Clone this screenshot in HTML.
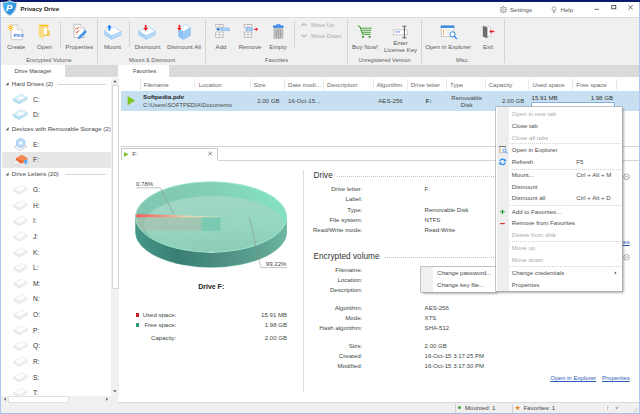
<!DOCTYPE html>
<html><head><meta charset="utf-8"><title>Privacy Drive</title>
<style>
html,body{margin:0;padding:0;}
body{width:640px;height:414px;overflow:hidden;position:relative;background:#fff;font-family:"Liberation Sans",sans-serif;}
.r{position:absolute;display:block;}
.t{position:absolute;line-height:10px;white-space:nowrap;}
</style></head><body>

<div class="r" style="left:0.00px;top:0.00px;width:640.00px;height:414.00px;background:#fff;"></div>
<div class="r" style="left:0.00px;top:17.50px;width:640.00px;height:47.00px;background:#f0f0f0;"></div>
<div class="r" style="left:0.00px;top:17.00px;width:640.00px;height:0.80px;background:#dcdcdc;"></div>
<div class="r" style="left:0.00px;top:64.50px;width:640.00px;height:12.70px;background:#dadada;"></div>
<div class="r" style="left:1.20px;top:64.60px;width:64.10px;height:13.00px;background:#fff;"></div>
<div class="r" style="left:118.10px;top:64.60px;width:50.90px;height:13.00px;background:#fff;"></div>
<span class="t" style="top:3.80px;font-size:6.1px;color:#1a1a1a;font-weight:bold;left:20.50px;">Privacy Drive</span>
<span class="t" style="top:4.50px;font-size:6.1px;color:#555;left:510.00px;">Settings</span>
<span class="t" style="top:4.50px;font-size:6.1px;color:#555;left:560.50px;">Help</span>
<div class="r" style="left:97.00px;top:19.00px;width:1.00px;height:44.00px;background:#d4d4d4;"></div>
<div class="r" style="left:205.00px;top:19.00px;width:1.00px;height:44.00px;background:#d4d4d4;"></div>
<div class="r" style="left:346.50px;top:19.00px;width:1.00px;height:44.00px;background:#d4d4d4;"></div>
<div class="r" style="left:420.50px;top:19.00px;width:1.00px;height:44.00px;background:#d4d4d4;"></div>
<div class="r" style="left:503.50px;top:19.00px;width:1.00px;height:44.00px;background:#d4d4d4;"></div>
<div class="r" style="left:60.00px;top:21.00px;width:1.00px;height:26.00px;background:#d4d4d4;"></div>
<div class="r" style="left:129.00px;top:21.00px;width:1.00px;height:26.00px;background:#d4d4d4;"></div>
<div class="r" style="left:293.90px;top:21.00px;width:1.00px;height:26.00px;background:#d4d4d4;"></div>
<span class="t" style="top:41.90px;font-size:6.1px;color:#5c5c5c;left:-133.90px;width:300px;text-align:center;">Create</span>
<span class="t" style="top:41.90px;font-size:6.1px;color:#5c5c5c;left:-105.50px;width:300px;text-align:center;">Open</span>
<span class="t" style="top:41.90px;font-size:6.1px;color:#5c5c5c;left:-70.50px;width:300px;text-align:center;">Properties</span>
<span class="t" style="top:41.90px;font-size:6.1px;color:#5c5c5c;left:-37.50px;width:300px;text-align:center;">Mount</span>
<span class="t" style="top:41.90px;font-size:6.1px;color:#5c5c5c;left:-2.50px;width:300px;text-align:center;">Dismount</span>
<span class="t" style="top:41.90px;font-size:6.1px;color:#5c5c5c;left:34.00px;width:300px;text-align:center;">Dismount All</span>
<span class="t" style="top:41.90px;font-size:6.1px;color:#5c5c5c;left:71.00px;width:300px;text-align:center;">Add</span>
<span class="t" style="top:41.90px;font-size:6.1px;color:#5c5c5c;left:100.00px;width:300px;text-align:center;">Remove</span>
<span class="t" style="top:41.90px;font-size:6.1px;color:#5c5c5c;left:128.00px;width:300px;text-align:center;">Empty</span>
<span class="t" style="top:41.90px;font-size:6.1px;color:#5c5c5c;left:215.00px;width:300px;text-align:center;">Buy Now!</span>
<span class="t" style="top:41.90px;font-size:6.1px;color:#5c5c5c;left:298.00px;width:300px;text-align:center;">Open in Explorer</span>
<span class="t" style="top:41.90px;font-size:6.1px;color:#5c5c5c;left:338.00px;width:300px;text-align:center;">Exit</span>
<span class="t" style="top:38.20px;font-size:6.1px;color:#5c5c5c;left:250.50px;width:300px;text-align:center;">Enter</span>
<span class="t" style="top:45.30px;font-size:6.1px;color:#5c5c5c;left:250.50px;width:300px;text-align:center;">License Key</span>
<span class="t" style="top:55.20px;font-size:5.6px;color:#5c5c5c;left:-101.00px;width:300px;text-align:center;">Encrypted Volume</span>
<span class="t" style="top:55.20px;font-size:5.6px;color:#5c5c5c;left:2.00px;width:300px;text-align:center;">Mount &amp; Dismount</span>
<span class="t" style="top:55.20px;font-size:5.6px;color:#5c5c5c;left:126.50px;width:300px;text-align:center;">Favorites</span>
<span class="t" style="top:55.20px;font-size:5.6px;color:#5c5c5c;left:234.50px;width:300px;text-align:center;">Unregistered Version</span>
<span class="t" style="top:55.20px;font-size:5.6px;color:#5c5c5c;left:312.50px;width:300px;text-align:center;">Misc.</span>
<span class="t" style="top:20.10px;font-size:5.82px;color:#aaa;left:311.00px;">Move Up</span>
<span class="t" style="top:31.20px;font-size:5.82px;color:#aaa;left:311.00px;">Move Down</span>
<span class="t" style="top:66.30px;font-size:5.65px;color:#484848;left:-117.10px;width:300px;text-align:center;">Drive Manager</span>
<span class="t" style="top:66.30px;font-size:5.65px;color:#484848;left:-5.40px;width:300px;text-align:center;">Favorites</span>
<div class="r" style="left:0.00px;top:77.50px;width:119.00px;height:325.00px;background:#fff;"></div>
<div class="r" style="left:1.50px;top:151.50px;width:109.20px;height:16.50px;background:#e6e6e6;"></div>
<span class="t" style="top:78.80px;font-size:6.1px;color:#444;left:11.80px;">Hard Drives (2)</span>
<div class="r" style="left:58.00px;top:83.80px;width:48.00px;height:0.70px;background:#d8d8d8;"></div>
<span class="t" style="top:123.80px;font-size:6.1px;color:#444;left:11.80px;">Devices with Removable Storage (2)</span>
<span class="t" style="top:169.00px;font-size:6.1px;color:#444;left:11.80px;">Drive Letters (20)</span>
<div class="r" style="left:65.00px;top:174.00px;width:41.00px;height:0.70px;background:#d8d8d8;"></div>
<span class="t" style="top:94.70px;font-size:6.6px;color:#333;left:33.00px;">C:</span>
<span class="t" style="top:110.20px;font-size:6.6px;color:#333;left:33.00px;">D:</span>
<span class="t" style="top:139.70px;font-size:6.6px;color:#333;left:33.00px;">E:</span>
<span class="t" style="top:155.00px;font-size:6.6px;color:#333;left:33.00px;">F:</span>
<span class="t" style="top:185.00px;font-size:6.6px;color:#333;left:33.00px;">G:</span>
<span class="t" style="top:200.70px;font-size:6.6px;color:#333;left:33.00px;">H:</span>
<span class="t" style="top:216.40px;font-size:6.6px;color:#333;left:33.00px;">I:</span>
<span class="t" style="top:231.90px;font-size:6.6px;color:#333;left:33.00px;">J:</span>
<span class="t" style="top:247.60px;font-size:6.6px;color:#333;left:33.00px;">K:</span>
<span class="t" style="top:263.20px;font-size:6.6px;color:#333;left:33.00px;">L:</span>
<span class="t" style="top:278.70px;font-size:6.6px;color:#333;left:33.00px;">M:</span>
<span class="t" style="top:294.40px;font-size:6.6px;color:#333;left:33.00px;">N:</span>
<span class="t" style="top:310.00px;font-size:6.6px;color:#333;left:33.00px;">O:</span>
<span class="t" style="top:325.60px;font-size:6.6px;color:#333;left:33.00px;">P:</span>
<span class="t" style="top:341.30px;font-size:6.6px;color:#333;left:33.00px;">Q:</span>
<span class="t" style="top:357.00px;font-size:6.6px;color:#333;left:33.00px;">R:</span>
<span class="t" style="top:372.70px;font-size:6.6px;color:#333;left:33.00px;">S:</span>
<span class="t" style="top:388.00px;font-size:6.6px;color:#333;left:33.00px;">T:</span>
<div class="r" style="left:119.50px;top:77.50px;width:519.50px;height:68.50px;background:#fff;"></div>
<div class="r" style="left:139.60px;top:79.00px;width:0.80px;height:11.00px;background:#e9e9e9;"></div>
<div class="r" style="left:194.10px;top:79.00px;width:0.80px;height:11.00px;background:#e9e9e9;"></div>
<div class="r" style="left:249.60px;top:79.00px;width:0.80px;height:11.00px;background:#e9e9e9;"></div>
<div class="r" style="left:283.80px;top:79.00px;width:0.80px;height:11.00px;background:#e9e9e9;"></div>
<div class="r" style="left:322.80px;top:79.00px;width:0.80px;height:11.00px;background:#e9e9e9;"></div>
<div class="r" style="left:373.30px;top:79.00px;width:0.80px;height:11.00px;background:#e9e9e9;"></div>
<div class="r" style="left:407.10px;top:79.00px;width:0.80px;height:11.00px;background:#e9e9e9;"></div>
<div class="r" style="left:446.30px;top:79.00px;width:0.80px;height:11.00px;background:#e9e9e9;"></div>
<div class="r" style="left:484.60px;top:79.00px;width:0.80px;height:11.00px;background:#e9e9e9;"></div>
<div class="r" style="left:528.10px;top:79.00px;width:0.80px;height:11.00px;background:#e9e9e9;"></div>
<div class="r" style="left:572.10px;top:79.00px;width:0.80px;height:11.00px;background:#e9e9e9;"></div>
<div class="r" style="left:616.10px;top:79.00px;width:0.80px;height:11.00px;background:#e9e9e9;"></div>
<span class="t" style="top:79.60px;font-size:6.1px;color:#6a6a6a;left:143.70px;">Filename</span>
<span class="t" style="top:79.60px;font-size:6.1px;color:#6a6a6a;left:198.70px;">Location</span>
<span class="t" style="top:79.60px;font-size:6.1px;color:#6a6a6a;left:253.70px;">Size</span>
<span class="t" style="top:79.60px;font-size:6.1px;color:#6a6a6a;left:288.00px;">Date modi...</span>
<span class="t" style="top:79.60px;font-size:6.1px;color:#6a6a6a;left:327.00px;">Description</span>
<span class="t" style="top:79.60px;font-size:6.1px;color:#6a6a6a;left:376.70px;">Algorithm</span>
<span class="t" style="top:79.60px;font-size:6.1px;color:#6a6a6a;left:410.70px;">Drive letter</span>
<span class="t" style="top:79.60px;font-size:6.1px;color:#6a6a6a;left:450.00px;">Type</span>
<span class="t" style="top:79.60px;font-size:6.1px;color:#6a6a6a;left:488.70px;">Capacity</span>
<span class="t" style="top:79.60px;font-size:6.1px;color:#6a6a6a;left:532.50px;">Used space</span>
<span class="t" style="top:79.60px;font-size:6.1px;color:#6a6a6a;left:576.20px;">Free space</span>
<div class="r" style="left:121.00px;top:91.00px;width:517.70px;height:19.80px;background:#c6dff1;"></div>
<span class="t" style="top:91.80px;font-size:6.2px;color:#222;font-weight:bold;left:143.00px;">Softpedia.pdv</span>
<span class="t" style="top:99.90px;font-size:5.87px;color:#4a4a4a;left:143.00px;">C:\Users\SOFTPEDIA\Documents</span>
<span class="t" style="top:96.30px;font-size:6.1px;color:#444;right:360.50px;">2.00 GB</span>
<span class="t" style="top:96.30px;font-size:6.1px;color:#444;left:288.00px;">16-Oct-15...</span>
<span class="t" style="top:96.30px;font-size:6.1px;color:#444;left:240.50px;width:300px;text-align:center;">AES-256</span>
<span class="t" style="top:96.30px;font-size:6.1px;color:#333;font-weight:bold;left:278.70px;width:300px;text-align:center;">F:</span>
<span class="t" style="top:92.60px;font-size:6.1px;color:#444;left:316.70px;width:300px;text-align:center;">Removable</span>
<span class="t" style="top:100.20px;font-size:6.1px;color:#444;left:316.70px;width:300px;text-align:center;">Disk</span>
<span class="t" style="top:96.30px;font-size:6.1px;color:#444;right:115.70px;">2.00 GB</span>
<span class="t" style="top:92.60px;font-size:6.1px;color:#333;left:531.60px;">15.91 MB</span>
<span class="t" style="top:92.60px;font-size:6.1px;color:#333;right:27.00px;">1.98 GB</span>
<div class="r" style="left:531.50px;top:103.00px;width:82.00px;height:6.00px;background:#fff;box-shadow:0 0 0 0.7px #6a9bd8;"></div>
<div class="r" style="left:119.50px;top:146.20px;width:519.50px;height:0.80px;background:#d4d4d4;"></div>
<div class="r" style="left:217.50px;top:159.50px;width:421.50px;height:0.80px;background:#d4d4d4;"></div>
<div class="r" style="left:120.60px;top:147.70px;width:97.00px;height:12.50px;background:#fff;border-right:0.8px solid #cacaca;border-left:0.8px solid #cacaca;border-top:0.8px solid #cacaca;box-sizing:border-box;"></div>
<span class="t" style="top:149.30px;font-size:6.1px;color:#444;left:132.30px;">F:</span>
<div class="r" style="left:302.60px;top:170.00px;width:0.80px;height:222.30px;background:#dcdcdc;"></div>
<span class="t" style="top:171.30px;font-size:8.25px;color:#333;left:313.50px;">Drive</span>
<div class="r" style="left:336.50px;top:176.30px;width:279.00px;height:0.00px;background:transparent;border-top:0.8px dotted #c4c4c4;"></div>
<span class="t" style="top:251.60px;font-size:8.25px;color:#333;left:313.50px;">Encrypted volume</span>
<div class="r" style="left:384.60px;top:256.60px;width:231.00px;height:0.00px;background:transparent;border-top:0.8px dotted #c4c4c4;"></div>
<span class="t" style="top:184.20px;font-size:6.15px;color:#3c4a44;right:277.70px;">Drive letter:</span>
<span class="t" style="top:184.20px;font-size:6.05px;color:#3c4a44;left:424.60px;">F:</span>
<span class="t" style="top:194.40px;font-size:6.15px;color:#3c4a44;right:277.70px;">Label:</span>
<span class="t" style="top:204.60px;font-size:6.15px;color:#3c4a44;right:277.70px;">Type:</span>
<span class="t" style="top:204.60px;font-size:6.05px;color:#3c4a44;left:424.60px;">Removable Disk</span>
<span class="t" style="top:214.80px;font-size:6.15px;color:#3c4a44;right:277.70px;">File system:</span>
<span class="t" style="top:214.80px;font-size:6.05px;color:#3c4a44;left:424.60px;">NTFS</span>
<span class="t" style="top:225.00px;font-size:6.15px;color:#3c4a44;right:277.70px;">Read/Write mode:</span>
<span class="t" style="top:225.00px;font-size:6.05px;color:#3c4a44;left:424.60px;">Read-Write</span>
<span class="t" style="top:264.70px;font-size:6.15px;color:#3c4a44;right:277.70px;">Filename:</span>
<span class="t" style="top:274.90px;font-size:6.15px;color:#3c4a44;right:277.70px;">Location:</span>
<span class="t" style="top:285.00px;font-size:6.15px;color:#3c4a44;right:277.70px;">Description:</span>
<span class="t" style="top:302.50px;font-size:6.15px;color:#3c4a44;right:277.70px;">Algorithm:</span>
<span class="t" style="top:302.50px;font-size:6.05px;color:#3c4a44;left:424.60px;">AES-256</span>
<span class="t" style="top:312.70px;font-size:6.15px;color:#3c4a44;right:277.70px;">Mode:</span>
<span class="t" style="top:312.70px;font-size:6.05px;color:#3c4a44;left:424.60px;">XTS</span>
<span class="t" style="top:322.90px;font-size:6.15px;color:#3c4a44;right:277.70px;">Hash algorithm:</span>
<span class="t" style="top:322.90px;font-size:6.05px;color:#3c4a44;left:424.60px;">SHA-512</span>
<span class="t" style="top:340.50px;font-size:6.15px;color:#3c4a44;right:277.70px;">Size:</span>
<span class="t" style="top:340.50px;font-size:6.05px;color:#3c4a44;left:424.60px;">2.00 GB</span>
<span class="t" style="top:350.60px;font-size:6.15px;color:#3c4a44;right:277.70px;">Created:</span>
<span class="t" style="top:350.60px;font-size:6.05px;color:#3c4a44;left:424.60px;">16-Oct-15 3:17:25 PM</span>
<span class="t" style="top:360.60px;font-size:6.15px;color:#3c4a44;right:277.70px;">Modified:</span>
<span class="t" style="top:360.60px;font-size:6.05px;color:#3c4a44;left:424.60px;">16-Oct-15 3:17:30 PM</span>
<span class="t" style="top:373.40px;font-size:6.1px;color:#2a5db8;left:550.40px;text-decoration:underline;">Open in Explorer</span>
<span class="t" style="top:373.40px;font-size:6.1px;color:#2a5db8;left:602.00px;text-decoration:underline;">Properties</span>
<span class="t" style="top:237.40px;font-size:6.1px;color:#2a5db8;left:602.00px;text-decoration:underline;">Properties</span>
<svg class="r" style="left:0;top:0" width="640" height="414" viewBox="0 0 640 414"><defs>
<linearGradient id="side" x1="0" y1="0" x2="1" y2="0"><stop offset="0" stop-color="#459688"/><stop offset="0.28" stop-color="#3a7f74"/><stop offset="0.52" stop-color="#4a8c80"/><stop offset="0.85" stop-color="#5fa493"/><stop offset="1" stop-color="#6eb8a2"/></linearGradient>
<linearGradient id="topg" x1="0" y1="0.6" x2="1" y2="0.3"><stop offset="0" stop-color="#7cc2ae"/><stop offset="0.6" stop-color="#7ecdb4"/><stop offset="1" stop-color="#80e2c2"/></linearGradient>
<linearGradient id="ing" x1="0.3" y1="0" x2="0.6" y2="1"><stop offset="0" stop-color="#a2d6c6" stop-opacity="0.9"/><stop offset="0.55" stop-color="#98d6c0" stop-opacity="0.8"/><stop offset="1" stop-color="#8ccbb6" stop-opacity="0.75"/></linearGradient>
<linearGradient id="wed" x1="0" y1="0" x2="1" y2="0"><stop offset="0" stop-color="#ec5a54"/><stop offset="0.3" stop-color="#ee8c78"/><stop offset="0.6" stop-color="#e8d4ac"/><stop offset="1" stop-color="#b4e2c6"/></linearGradient>
<pattern id="hat" width="1.6" height="1.6" patternUnits="userSpaceOnUse" patternTransform="rotate(45)"><rect width="0.5" height="1.6" fill="#ffffff" fill-opacity="0.10"/></pattern>
<clipPath id="topclip"><ellipse cx="211.1" cy="217.0" rx="75.8" ry="35.5"/></clipPath>
</defs><path d="M135.3,217.0 L135.3,232.0 A75.8,35.5 0 0 0 286.9,232.0 L286.9,217.0 Z" fill="url(#side)"/><path d="M135.3,232.0 A75.8,35.5 0 0 0 286.9,232.0" fill="none" stroke="#6fc0a8" stroke-width="0.5" stroke-opacity="0.7"/><ellipse cx="211.1" cy="217.0" rx="75.8" ry="35.5" fill="url(#topg)"/><g clip-path="url(#topclip)"><ellipse cx="213.7" cy="224.6" rx="69.8" ry="28.5" fill="url(#ing)"/><rect x="135.3" y="217.0" width="66.2" height="13.7" fill="#a8bca8" fill-opacity="0.62"/><rect x="201.5" y="217.0" width="19.2" height="13.7" fill="#6cc4ac" fill-opacity="0.75"/><polygon points="135.3,214.0 135.3,217.2 221,217.2 221,216.6" fill="url(#wed)"/></g><ellipse cx="211.1" cy="217.0" rx="75.8" ry="35.5" fill="url(#hat)"/><ellipse cx="211.1" cy="217.0" rx="75.5" ry="35.2" fill="none" stroke="#a4f2d6" stroke-width="0.7" stroke-opacity="0.85"/><ellipse cx="211.1" cy="252.3" rx="4.5" ry="0.6" fill="#fff" fill-opacity="0.4"/><path d="M136,187.8 L160.5,187.8 L174.2,215" fill="none" stroke="#8a8a8a" stroke-width="0.5"/><path d="M249.4,217.9 L261,267.6 L287,267.6" fill="none" stroke="#8a8a8a" stroke-width="0.5"/></svg>
<span class="t" style="top:178.70px;font-size:6.1px;color:#444;left:136.00px;">0.78%</span>
<span class="t" style="top:258.80px;font-size:6.1px;color:#444;left:265.80px;">99.22%</span>
<span class="t" style="top:281.50px;font-size:7px;color:#222;font-weight:bold;left:61.20px;width:300px;text-align:center;">Drive F:</span>
<div class="r" style="left:136.20px;top:313.30px;width:3.30px;height:3.30px;background:#c8202a;"></div>
<div class="r" style="left:136.20px;top:323.30px;width:3.30px;height:3.30px;background:#2f9a80;"></div>
<span class="t" style="top:310.00px;font-size:6.05px;color:#3c4a44;right:463.70px;">Used space:</span>
<span class="t" style="top:320.00px;font-size:6.05px;color:#3c4a44;right:463.70px;">Free space:</span>
<span class="t" style="top:333.00px;font-size:6.05px;color:#3c4a44;right:463.70px;">Capacity:</span>
<span class="t" style="top:310.00px;font-size:6.05px;color:#3c4a44;right:353.00px;">15.91 MB</span>
<span class="t" style="top:320.00px;font-size:6.05px;color:#3c4a44;right:353.00px;">1.98 GB</span>
<span class="t" style="top:333.00px;font-size:6.05px;color:#3c4a44;right:353.00px;">2.00 GB</span>
<div class="r" style="left:0.00px;top:402.30px;width:640.00px;height:11.00px;background:#f0f0f0;border-top:0.7px solid #dadada;"></div>
<div class="r" style="left:454.70px;top:403.50px;width:0.80px;height:9.00px;background:#d0d0d0;"></div>
<div class="r" style="left:511.50px;top:403.50px;width:0.80px;height:9.00px;background:#d0d0d0;"></div>
<div class="r" style="left:458.30px;top:406.20px;width:3.20px;height:3.20px;background:#3aa635;border-radius:50%;"></div>
<span class="t" style="top:402.90px;font-size:6.1px;color:#444;left:465.00px;">Mounted: 1</span>
<span class="t" style="top:402.90px;font-size:6.1px;color:#444;left:523.40px;">Favorites: 1</span>
<div class="r" style="left:0.00px;top:0.00px;width:640.00px;height:1.70px;background:#0a1a6a;"></div>
<div class="r" style="left:0.00px;top:1.70px;width:1.20px;height:412.30px;background:#b4c6ee;"></div>
<div class="r" style="left:638.80px;top:1.70px;width:1.20px;height:412.30px;background:#b4c6ee;"></div>
<div class="r" style="left:0.00px;top:412.60px;width:640.00px;height:1.40px;background:#a9bdec;"></div>
<svg class="r" style="left:0;top:0" width="640" height="414" viewBox="0 0 640 414"><defs><linearGradient id="lg" x1="0" y1="0" x2="1" y2="1"><stop offset="0" stop-color="#52bcf2"/><stop offset="1" stop-color="#1a80d8"/></linearGradient></defs><path d="M9.7,0.6 C7.6,2.2 5,2.6 2.6,2.4 C2.4,8 4.6,13 9.7,15.7 C14.8,13 17,8 16.8,2.4 C14.4,2.6 11.8,2.2 9.7,0.6 Z" fill="url(#lg)" stroke="#d4dae4" stroke-width="1.1"/><text x="5.9" y="11.3" font-family="Liberation Sans, sans-serif" font-size="9.6" font-weight="bold" font-style="italic" fill="#fff">P</text><g fill="none" stroke="#8a8a8a" stroke-width="0.7"><circle cx="503.4" cy="9.7" r="2.7"/><circle cx="503.4" cy="9.7" r="1" /><path d="M506.10,9.70 L507.00,9.70" stroke-width="1.1"/><path d="M505.31,11.61 L505.95,12.25" stroke-width="1.1"/><path d="M503.40,12.40 L503.40,13.30" stroke-width="1.1"/><path d="M501.49,11.61 L500.85,12.25" stroke-width="1.1"/><path d="M500.70,9.70 L499.80,9.70" stroke-width="1.1"/><path d="M501.49,7.79 L500.85,7.15" stroke-width="1.1"/><path d="M503.40,7.00 L503.40,6.10" stroke-width="1.1"/><path d="M505.31,7.79 L505.95,7.15" stroke-width="1.1"/></g><g fill="none" stroke="#8a8a8a" stroke-width="0.7"><circle cx="554" cy="8.6" r="1.9"/><path d="M553.2,10.4 L553.2,12.6 L554.8,12.6 L554.8,10.4"/></g><path d="M594.5,9.3 L599,9.3" stroke="#333" stroke-width="0.7"/><rect x="611.8" y="5.6" width="4" height="3.2" fill="none" stroke="#333" stroke-width="0.8"/><path d="M628.5,5.2 L632.7,9.6 M632.7,5.2 L628.5,9.6" stroke="#333" stroke-width="0.7"/><path d="M11.6,25 L17.4,25 L22.1,29.7 L22.1,39.2 Q22.1,39.7 21.6,39.7 L11.6,39.7 Q11.1,39.7 11.1,39.2 L11.1,25.5 Q11.1,25 11.6,25 Z" fill="#fff" stroke="#b4b4b4" stroke-width="0.7"/><path d="M17.4,25 L17.4,29.7 L22.1,29.7" fill="#f4f4f4" stroke="#b4b4b4" stroke-width="0.6"/><text x="13.8" y="37" font-family="Liberation Sans, sans-serif" font-size="4.3" font-weight="bold" fill="#1f6fe0" textLength="10.2" lengthAdjust="spacingAndGlyphs">PDV</text><g stroke="#fcc228" stroke-width="0.9" stroke-linecap="round"><path d="M11.50,27.50 L13.30,27.50"/><path d="M11.21,28.21 L12.48,29.48"/><path d="M10.50,28.50 L10.50,30.30"/><path d="M9.79,28.21 L8.52,29.48"/><path d="M9.50,27.50 L7.70,27.50"/><path d="M9.79,26.79 L8.52,25.52"/><path d="M10.50,26.50 L10.50,24.70"/><path d="M11.21,26.79 L12.48,25.52"/></g><circle cx="10.5" cy="27.5" r="1.5" fill="#fcc228"/><circle cx="10.5" cy="27.5" r="0.6" fill="#fff4c8"/><rect x="38.8" y="24.8" width="9.5" height="11.1" fill="#f9d870"/><rect x="38.8" y="24.8" width="9.5" height="1.2" fill="#f5c020"/><path d="M47,30.5 L48.8,30.5 L49.9,31.8 L49.9,35.9 L47,35.9 Z" fill="#f7cc5c"/><path d="M43.9,28.6 L45,27.5 L46,27.5 L47,28.6 L47,34.7 L43.9,34.7 Z" fill="#fff"/><rect x="43.5" y="34.7" width="4.8" height="1.2" fill="#f5c332"/><path d="M38.8,25.6 L43.5,27.3 L43.5,38.9 L38.8,36.8 Z" fill="#f9dd88"/><path d="M74.4,24.3 L80.3,24.3 L84.3,28.1 L84.3,37.5 L74,37.5 L74,24.3 Z" fill="#fff" stroke="#a8a8a8" stroke-width="0.7"/><path d="M80.3,24.3 L80.3,28.1 L84.3,28.1" fill="#f4f4f4" stroke="#b4b4b4" stroke-width="0.5"/><path d="M75.5,28 L76.7,29.3 L79,26.9" fill="none" stroke="#e8501c" stroke-width="1"/><path d="M75.5,31.6 L76.7,32.8 L79,30.4" fill="none" stroke="#e02424" stroke-width="1"/><path d="M76.6,34.7 L78.6,34.7" stroke="#bbb" stroke-width="0.7"/><path d="M86,31 L79,37.8" stroke="#3a8ae8" stroke-width="2.5" stroke-linecap="butt"/><path d="M85.4,30.4 L78.6,37" stroke="#7ab4f4" stroke-width="0.6"/><circle cx="78.5" cy="38.3" r="0.7" fill="#1f6fe0"/><polygon points="104.6,31.2 111.6,35.8 111.6,39.3 104.6,34.7" fill="#8ec6f6" stroke="#78b8f2" stroke-width="0.5" stroke-linejoin="round"/><polygon points="121.1,31.4 111.6,35.8 111.6,39.3 121.1,34.9" fill="#a6d2f8" stroke="#78b8f2" stroke-width="0.5" stroke-linejoin="round"/><polyline points="104.6,32.36666666666667 111.6,36.96666666666666 121.1,32.56666666666666" fill="none" stroke="#d8ecfc" stroke-width="0.6"/><polyline points="104.6,33.53333333333333 111.6,38.13333333333333 121.1,33.733333333333334" fill="none" stroke="#d8ecfc" stroke-width="0.6"/><polygon points="114.2,27 121.1,31.4 111.6,35.8 104.6,31.2" fill="#fff" stroke="#78b8f2" stroke-width="0.5" stroke-linejoin="round"/><path d="M109.4,30.6 L109.4,26.3" stroke="#0a7cff" stroke-width="1.6"/><polygon points="109.4,24.8 111.7,27.400000000000002 107.10000000000001,27.400000000000002" fill="#0a7cff"/><polygon points="138.8,31.2 146.2,35.8 146.2,39.3 138.8,34.7" fill="#8ec6f6" stroke="#78b8f2" stroke-width="0.5" stroke-linejoin="round"/><polygon points="155.3,31.4 146.2,35.8 146.2,39.3 155.3,34.9" fill="#a6d2f8" stroke="#78b8f2" stroke-width="0.5" stroke-linejoin="round"/><polyline points="138.8,32.36666666666667 146.2,36.96666666666666 155.3,32.56666666666666" fill="none" stroke="#d8ecfc" stroke-width="0.6"/><polyline points="138.8,33.53333333333333 146.2,38.13333333333333 155.3,33.733333333333334" fill="none" stroke="#d8ecfc" stroke-width="0.6"/><polygon points="148.8,27 155.3,31.4 146.2,35.8 138.8,31.2" fill="#fff" stroke="#78b8f2" stroke-width="0.5" stroke-linejoin="round"/><path d="M145.7,25 L145.7,29.3" stroke="#f0101c" stroke-width="1.6"/><polygon points="145.7,30.8 148.1,28.1 143.29999999999998,28.1" fill="#f0101c"/><polygon points="178.6,28.6 183.4,31.6 183.4,39.6 178.6,36.6" fill="#62a8ee" stroke="#8cc2f4" stroke-width="0.5" stroke-linejoin="round"/><polygon points="190.4,27.6 183.4,31.6 183.4,39.6 190.4,35.6" fill="#80bcf2" stroke="#8cc2f4" stroke-width="0.5" stroke-linejoin="round"/><polyline points="178.6,29.933333333333334 183.4,32.93333333333334 190.4,28.933333333333334" fill="none" stroke="#c0defa" stroke-width="0.6"/><polyline points="178.6,31.26666666666667 183.4,34.266666666666666 190.4,30.26666666666667" fill="none" stroke="#c0defa" stroke-width="0.6"/><polyline points="178.6,32.6 183.4,35.6 190.4,31.6" fill="none" stroke="#c0defa" stroke-width="0.6"/><polyline points="178.6,33.93333333333334 183.4,36.93333333333334 190.4,32.93333333333334" fill="none" stroke="#c0defa" stroke-width="0.6"/><polyline points="178.6,35.266666666666666 183.4,38.266666666666666 190.4,34.266666666666666" fill="none" stroke="#c0defa" stroke-width="0.6"/><polygon points="185.6,24.6 190.4,27.6 183.4,31.6 178.6,28.6" fill="#fff" stroke="#8cc2f4" stroke-width="0.5" stroke-linejoin="round"/><path d="M179.4,24.9 L179.4,29.1" stroke="#f0101c" stroke-width="1.6"/><polygon points="179.4,30.6 181.8,27.900000000000002 177.0,27.900000000000002" fill="#f0101c"/><rect x="215.8" y="24.4" width="7.2" height="2.7" fill="#fff" stroke="#9a9a9a" stroke-width="0.6"/><path d="M219.4,24.4 L219.4,27.099999999999998" stroke="#9a9a9a" stroke-width="0.5"/><rect x="215.8" y="32" width="7.2" height="5.5" fill="#fff" stroke="#9a9a9a" stroke-width="0.6"/><path d="M215.8,34.75 L223.0,34.75" stroke="#9a9a9a" stroke-width="0.5"/><path d="M219.4,32 L219.4,37.5" stroke="#9a9a9a" stroke-width="0.5"/><rect x="221.4" y="27.9" width="7.8" height="2.9" fill="#9cc8f4" stroke="#6aa8ea" stroke-width="0.4"/><path d="M224,27.9 L224,30.8 M226.6,27.9 L226.6,30.8" stroke="#e8f3fd" stroke-width="0.4"/><path d="M220.4,29.3 L217.39999999999998,29.3" stroke="#1e78e6" stroke-width="1.3"/><polygon points="216.2,29.3 218.39999999999998,27.5 218.39999999999998,31.1" fill="#1e78e6"/><rect x="244.2" y="24.4" width="7.6" height="2.7" fill="#fff" stroke="#9a9a9a" stroke-width="0.6"/><path d="M248.0,24.4 L248.0,27.099999999999998" stroke="#9a9a9a" stroke-width="0.5"/><rect x="244.2" y="32" width="7.6" height="5.5" fill="#fff" stroke="#9a9a9a" stroke-width="0.6"/><path d="M244.2,34.75 L251.79999999999998,34.75" stroke="#9a9a9a" stroke-width="0.5"/><path d="M248.0,32 L248.0,37.5" stroke="#9a9a9a" stroke-width="0.5"/><rect x="246" y="27.9" width="6.8" height="2.9" fill="#9cc8f4" stroke="#6aa8ea" stroke-width="0.4"/><path d="M248.3,27.9 L248.3,30.8 M250.6,27.9 L250.6,30.8" stroke="#e8f3fd" stroke-width="0.4"/><path d="M254.2,29.3 L257.0,29.3" stroke="#e8202a" stroke-width="1.3"/><polygon points="258.2,29.3 256.0,27.5 256.0,31.1" fill="#e8202a"/><rect x="273.9" y="28.2" width="9" height="10.3" rx="0.8" fill="#c4c4c4" stroke="#9a9a9a" stroke-width="0.5"/><path d="M276.2,29.6 L276.2,37.2 M278.4,29.6 L278.4,37.2 M280.6,29.6 L280.6,37.2" stroke="#8a8a8a" stroke-width="0.7"/><rect x="273" y="25.6" width="10.7" height="2.1" rx="0.6" fill="#2f86e8"/><rect x="276.8" y="24.5" width="3.2" height="1.4" fill="none" stroke="#2f86e8" stroke-width="0.7"/><path d="M301.3,26 L304,23.7 L306.7,26" fill="none" stroke="#bcbcbc" stroke-width="1.5"/><path d="M301.3,34.5 L304,36.8 L306.7,34.5" fill="none" stroke="#bcbcbc" stroke-width="1.5"/><g fill="none" stroke="#3d9a2c" stroke-width="1"><path d="M357.8,26 L359.8,26.4 L362.6,34.3 L370.6,34.3"/><path d="M360.6,28.2 L371.8,28.2 M361.4,30.3 L371.2,30.3 M362.2,32.3 L370.8,32.3" stroke-width="0.9"/></g><circle cx="363" cy="36.8" r="1.15" fill="#3d9a2c"/><circle cx="369.6" cy="36.8" r="1.15" fill="#3d9a2c"/><rect x="393.6" y="29.9" width="13.7" height="4.9" fill="#fff" stroke="#b4b4b4" stroke-width="0.6"/><text x="395.3" y="35.3" font-family="Liberation Sans, sans-serif" font-size="6" fill="#3a78e0">**</text><path d="M404.4,26.3 L404.4,37.8 M402.4,26 L403.6,26.3 L405.2,26.3 L406.4,26 M402.4,38.1 L403.6,37.8 L405.2,37.8 L406.4,38.1" fill="none" stroke="#333" stroke-width="0.8"/><g transform="translate(441.1,25.9) scale(1.0)"><rect x="0" y="0" width="12.8" height="10.8" fill="#fff" stroke="#a8a8a8" stroke-width="0.6"/><rect x="-0.3" y="-0.3" width="13.4" height="2.3" fill="#2f86e8"/><path d="M2.3,3.8 L2.3,9" stroke="#f0a030" stroke-width="0.9"/><path d="M4.8,4.2 L10.8,4.2 M4.8,6.2 L8,6.2 M4.8,8.2 L7.4,8.2" stroke="#c8c8c8" stroke-width="0.6"/><circle cx="11.3" cy="8.4" r="2.6" fill="#fff" stroke="#2f86e8" stroke-width="1"/><path d="M13.2,10.4 L15.4,12.7" stroke="#2f86e8" stroke-width="1.3" stroke-linecap="round"/></g><rect x="486" y="26.2" width="4.6" height="10.4" fill="#fafafa" stroke="#c0c0c0" stroke-width="0.5"/><path d="M483,26 L487.2,27.6 L487.2,38 L483,36.4 Z" fill="#6e6e6e" stroke="#555" stroke-width="0.3"/><path d="M494.4,31.5 L490.4,31.5" stroke="#e8202a" stroke-width="1.3"/><polygon points="489.2,31.5 491.59999999999997,29.5 491.59999999999997,33.5" fill="#e8202a"/><polygon points="13.2,98.8 19.2,102 19.2,103.9 13.2,100.7" fill="#b4dcee" stroke="#9ed2ea" stroke-width="0.5" stroke-linejoin="round"/><polygon points="27.2,97.4 19.2,102 19.2,103.9 27.2,99.30000000000001" fill="#c4e4f2" stroke="#9ed2ea" stroke-width="0.5" stroke-linejoin="round"/><polygon points="21.4,94.2 27.2,97.4 19.2,102 13.2,98.8" fill="#dff1fa" stroke="#9ed2ea" stroke-width="0.5" stroke-linejoin="round"/><ellipse cx="20.4" cy="98" rx="3.7" ry="1.7" fill="#f8fdff" stroke="#b8e0f0" stroke-width="0.3" transform="rotate(-12 20.4 98)"/><polygon points="13.2,114.3 19.2,117.5 19.2,119.4 13.2,116.2" fill="#b4dcee" stroke="#9ed2ea" stroke-width="0.5" stroke-linejoin="round"/><polygon points="27.2,112.9 19.2,117.5 19.2,119.4 27.2,114.80000000000001" fill="#c4e4f2" stroke="#9ed2ea" stroke-width="0.5" stroke-linejoin="round"/><polygon points="21.4,109.7 27.2,112.9 19.2,117.5 13.2,114.3" fill="#dff1fa" stroke="#9ed2ea" stroke-width="0.5" stroke-linejoin="round"/><ellipse cx="20.4" cy="113.5" rx="3.7" ry="1.7" fill="#f8fdff" stroke="#b8e0f0" stroke-width="0.3" transform="rotate(-12 20.4 113.5)"/><polygon points="13.9,189.3 19.4,192.3 19.4,194.3 13.9,191.3" fill="#f0f0f0" stroke="#dadada" stroke-width="0.5" stroke-linejoin="round"/><polygon points="27.1,188.10000000000002 19.4,192.3 19.4,194.3 27.1,190.10000000000002" fill="#f4f4f4" stroke="#dadada" stroke-width="0.5" stroke-linejoin="round"/><polygon points="21.6,185.10000000000002 27.1,188.10000000000002 19.4,192.3 13.9,189.3" fill="#fdfdfd" stroke="#dadada" stroke-width="0.5" stroke-linejoin="round"/><polygon points="13.9,205.0 19.4,208.0 19.4,210.0 13.9,207.0" fill="#f0f0f0" stroke="#dadada" stroke-width="0.5" stroke-linejoin="round"/><polygon points="27.1,203.8 19.4,208.0 19.4,210.0 27.1,205.8" fill="#f4f4f4" stroke="#dadada" stroke-width="0.5" stroke-linejoin="round"/><polygon points="21.6,200.8 27.1,203.8 19.4,208.0 13.9,205.0" fill="#fdfdfd" stroke="#dadada" stroke-width="0.5" stroke-linejoin="round"/><polygon points="13.9,220.7 19.4,223.7 19.4,225.7 13.9,222.7" fill="#f0f0f0" stroke="#dadada" stroke-width="0.5" stroke-linejoin="round"/><polygon points="27.1,219.5 19.4,223.7 19.4,225.7 27.1,221.5" fill="#f4f4f4" stroke="#dadada" stroke-width="0.5" stroke-linejoin="round"/><polygon points="21.6,216.5 27.1,219.5 19.4,223.7 13.9,220.7" fill="#fdfdfd" stroke="#dadada" stroke-width="0.5" stroke-linejoin="round"/><polygon points="13.9,236.2 19.4,239.2 19.4,241.2 13.9,238.2" fill="#f0f0f0" stroke="#dadada" stroke-width="0.5" stroke-linejoin="round"/><polygon points="27.1,235.0 19.4,239.2 19.4,241.2 27.1,237.0" fill="#f4f4f4" stroke="#dadada" stroke-width="0.5" stroke-linejoin="round"/><polygon points="21.6,232.0 27.1,235.0 19.4,239.2 13.9,236.2" fill="#fdfdfd" stroke="#dadada" stroke-width="0.5" stroke-linejoin="round"/><polygon points="13.9,251.9 19.4,254.9 19.4,256.9 13.9,253.9" fill="#f0f0f0" stroke="#dadada" stroke-width="0.5" stroke-linejoin="round"/><polygon points="27.1,250.70000000000002 19.4,254.9 19.4,256.9 27.1,252.70000000000002" fill="#f4f4f4" stroke="#dadada" stroke-width="0.5" stroke-linejoin="round"/><polygon points="21.6,247.70000000000002 27.1,250.70000000000002 19.4,254.9 13.9,251.9" fill="#fdfdfd" stroke="#dadada" stroke-width="0.5" stroke-linejoin="round"/><polygon points="13.9,267.5 19.4,270.5 19.4,272.5 13.9,269.5" fill="#f0f0f0" stroke="#dadada" stroke-width="0.5" stroke-linejoin="round"/><polygon points="27.1,266.29999999999995 19.4,270.5 19.4,272.5 27.1,268.29999999999995" fill="#f4f4f4" stroke="#dadada" stroke-width="0.5" stroke-linejoin="round"/><polygon points="21.6,263.29999999999995 27.1,266.29999999999995 19.4,270.5 13.9,267.5" fill="#fdfdfd" stroke="#dadada" stroke-width="0.5" stroke-linejoin="round"/><polygon points="13.9,283.0 19.4,286.0 19.4,288.0 13.9,285.0" fill="#f0f0f0" stroke="#dadada" stroke-width="0.5" stroke-linejoin="round"/><polygon points="27.1,281.79999999999995 19.4,286.0 19.4,288.0 27.1,283.79999999999995" fill="#f4f4f4" stroke="#dadada" stroke-width="0.5" stroke-linejoin="round"/><polygon points="21.6,278.79999999999995 27.1,281.79999999999995 19.4,286.0 13.9,283.0" fill="#fdfdfd" stroke="#dadada" stroke-width="0.5" stroke-linejoin="round"/><polygon points="13.9,298.69999999999993 19.4,301.69999999999993 19.4,303.69999999999993 13.9,300.69999999999993" fill="#f0f0f0" stroke="#dadada" stroke-width="0.5" stroke-linejoin="round"/><polygon points="27.1,297.5 19.4,301.69999999999993 19.4,303.69999999999993 27.1,299.5" fill="#f4f4f4" stroke="#dadada" stroke-width="0.5" stroke-linejoin="round"/><polygon points="21.6,294.5 27.1,297.5 19.4,301.69999999999993 13.9,298.69999999999993" fill="#fdfdfd" stroke="#dadada" stroke-width="0.5" stroke-linejoin="round"/><polygon points="13.9,314.29999999999995 19.4,317.29999999999995 19.4,319.29999999999995 13.9,316.29999999999995" fill="#f0f0f0" stroke="#dadada" stroke-width="0.5" stroke-linejoin="round"/><polygon points="27.1,313.1 19.4,317.29999999999995 19.4,319.29999999999995 27.1,315.1" fill="#f4f4f4" stroke="#dadada" stroke-width="0.5" stroke-linejoin="round"/><polygon points="21.6,310.1 27.1,313.1 19.4,317.29999999999995 13.9,314.29999999999995" fill="#fdfdfd" stroke="#dadada" stroke-width="0.5" stroke-linejoin="round"/><polygon points="13.9,329.9 19.4,332.9 19.4,334.9 13.9,331.9" fill="#f0f0f0" stroke="#dadada" stroke-width="0.5" stroke-linejoin="round"/><polygon points="27.1,328.69999999999993 19.4,332.9 19.4,334.9 27.1,330.69999999999993" fill="#f4f4f4" stroke="#dadada" stroke-width="0.5" stroke-linejoin="round"/><polygon points="21.6,325.69999999999993 27.1,328.69999999999993 19.4,332.9 13.9,329.9" fill="#fdfdfd" stroke="#dadada" stroke-width="0.5" stroke-linejoin="round"/><polygon points="13.9,345.6 19.4,348.6 19.4,350.6 13.9,347.6" fill="#f0f0f0" stroke="#dadada" stroke-width="0.5" stroke-linejoin="round"/><polygon points="27.1,344.4 19.4,348.6 19.4,350.6 27.1,346.4" fill="#f4f4f4" stroke="#dadada" stroke-width="0.5" stroke-linejoin="round"/><polygon points="21.6,341.4 27.1,344.4 19.4,348.6 13.9,345.6" fill="#fdfdfd" stroke="#dadada" stroke-width="0.5" stroke-linejoin="round"/><polygon points="13.9,361.29999999999995 19.4,364.29999999999995 19.4,366.29999999999995 13.9,363.29999999999995" fill="#f0f0f0" stroke="#dadada" stroke-width="0.5" stroke-linejoin="round"/><polygon points="27.1,360.1 19.4,364.29999999999995 19.4,366.29999999999995 27.1,362.1" fill="#f4f4f4" stroke="#dadada" stroke-width="0.5" stroke-linejoin="round"/><polygon points="21.6,357.1 27.1,360.1 19.4,364.29999999999995 13.9,361.29999999999995" fill="#fdfdfd" stroke="#dadada" stroke-width="0.5" stroke-linejoin="round"/><polygon points="13.9,377.0 19.4,380.0 19.4,382.0 13.9,379.0" fill="#f0f0f0" stroke="#dadada" stroke-width="0.5" stroke-linejoin="round"/><polygon points="27.1,375.79999999999995 19.4,380.0 19.4,382.0 27.1,377.79999999999995" fill="#f4f4f4" stroke="#dadada" stroke-width="0.5" stroke-linejoin="round"/><polygon points="21.6,372.79999999999995 27.1,375.79999999999995 19.4,380.0 13.9,377.0" fill="#fdfdfd" stroke="#dadada" stroke-width="0.5" stroke-linejoin="round"/><polygon points="13.9,392.29999999999995 19.4,395.29999999999995 19.4,397.29999999999995 13.9,394.29999999999995" fill="#f0f0f0" stroke="#dadada" stroke-width="0.5" stroke-linejoin="round"/><polygon points="27.1,391.1 19.4,395.29999999999995 19.4,397.29999999999995 27.1,393.1" fill="#f4f4f4" stroke="#dadada" stroke-width="0.5" stroke-linejoin="round"/><polygon points="21.6,388.1 27.1,391.1 19.4,395.29999999999995 13.9,392.29999999999995" fill="#fdfdfd" stroke="#dadada" stroke-width="0.5" stroke-linejoin="round"/><polygon points="8.6,82.2 8.6,85.2 5.6,85.2" fill="#555"/><polygon points="8.6,127.20000000000002 8.6,130.20000000000002 5.6,130.20000000000002" fill="#555"/><polygon points="8.6,172.4 8.6,175.4 5.6,175.4" fill="#555"/><polygon points="13.9,146.8 20.6,143.4 27,146.6 19.8,150.4" fill="#fff" stroke="#a4a4a4" stroke-width="0.5" stroke-linejoin="round"/><circle cx="20.7" cy="143" r="4.5" fill="#c4e0f8" stroke="#7cb6ee" stroke-width="0.6"/><circle cx="20.7" cy="143" r="2.4" fill="#d8ecfc" stroke="#8cc0f0" stroke-width="0.4"/><circle cx="20.7" cy="143" r="1.2" fill="#fff"/><polygon points="16,158.2 21.9,154.9 27.4,158.2 27.4,161 21.5,163.4 16,161" fill="#ee6428"/><polygon points="16,158.2 21.9,154.9 27.4,158.2 21.5,160.8" fill="#f88650"/><polygon points="12.6,162 16.9,160.4 19,162.4 19,163.6 15.2,164.7 12.6,163" fill="#f4f4f4" stroke="#c4c4c4" stroke-width="0.4"/><path d="M25.9,159.4 C25,160.2 24.4,160.3 23.9,160.3 C23.9,162.6 24.6,163.9 25.9,164.7 C27.2,163.9 27.9,162.6 27.9,160.3 C27.4,160.3 26.8,160.2 25.9,159.4 Z" fill="#2f8ee8" stroke="#e8f2fc" stroke-width="0.5"/><path d="M25.9,159.8 L25.9,164.2 C27,163.4 27.5,162.4 27.5,160.6 C27,160.6 26.5,160.4 25.9,159.8 Z" fill="#8cc8f8"/><polygon points="127.6,96 135.2,100.6 127.6,105.2" fill="#7ec820"/><polygon points="124.1,152 128.4,154.4 124.1,156.8" fill="#6cbf20"/><path d="M208.3,151.8 L212.1,155.5 M212.1,151.8 L208.3,155.5" stroke="#444" stroke-width="0.6"/><circle cx="626.6" cy="176.8" r="2.8" fill="#fff" stroke="#6a6a6a" stroke-width="0.55"/><path d="M625.3,177.4 L626.6,176.10000000000002 L627.9,177.4" fill="none" stroke="#555" stroke-width="0.6"/><circle cx="626.6" cy="257.3" r="2.8" fill="#fff" stroke="#6a6a6a" stroke-width="0.55"/><path d="M625.3,257.90000000000003 L626.6,256.6 L627.9,257.90000000000003" fill="none" stroke="#555" stroke-width="0.6"/><rect x="605" y="405.4" width="5.2" height="5.4" fill="#fff" stroke="#ddd" stroke-width="0.4"/><rect x="614" y="405.4" width="5.6" height="5.4" fill="#fff" stroke="#ddd" stroke-width="0.4"/><text x="606.7" y="410" font-family="Liberation Sans, sans-serif" font-size="5" font-weight="bold" fill="#a0a0a0">f</text><path d="M615.2,409.6 C617.6,409.8 618.4,408.2 618.4,407 L618.9,406.5 L618.3,406.5 C617.8,406 616.9,406.3 617,407.2 C616.2,407.2 615.7,406.8 615.3,406.4 C615.1,407.2 615.4,407.8 615.9,408.2 C615.7,408.8 615.5,409.2 615.2,409.6 Z" fill="#aaa"/><polygon points="517.60,405.40 518.22,407.05 519.98,407.13 518.60,408.22 519.07,409.92 517.60,408.95 516.13,409.92 516.60,408.22 515.22,407.13 516.98,407.05" fill="#e8780c"/><path d="M637.5,408 L633.5,412 M637.5,410 L635.5,412" stroke="#bbb" stroke-width="0.6"/></svg>
<div class="r" style="left:111.20px;top:77.50px;width:7.60px;height:318.10px;background:#f1f1f1;"></div>
<div class="r" style="left:110.70px;top:395.60px;width:7.70px;height:7.00px;background:#f0f0f0;"></div>
<div class="r" style="left:112.60px;top:85.80px;width:5.50px;height:202.30px;background:#fff;box-shadow:0 0 0 0.7px #cdcdcd;"></div>
<div class="r" style="left:1.20px;top:395.60px;width:109.50px;height:7.20px;background:#f0f0f0;"></div>
<div class="r" style="left:8.50px;top:396.60px;width:59.00px;height:5.20px;background:#fff;box-shadow:0 0 0 0.5px #cfcfcf;"></div>
<svg class="r" style="left:0;top:0" width="640" height="414" viewBox="0 0 640 414"><polygon points="114.9,80.2 116.6,82.2 113.2,82.2" fill="#555"/><polygon points="114.9,392.2 116.6,390.2 113.2,390.2" fill="#555"/><polygon points="4,399.2 5.8,397.6 5.8,400.8" fill="#555"/><polygon points="108,399.2 106.2,397.6 106.2,400.8" fill="#555"/></svg>
<div class="r" style="left:420.80px;top:266.70px;width:75.00px;height:25.30px;background:#fff;box-shadow:0 0 0 0.7px #a8a8a8, 1.5px 1.5px 2px rgba(0,0,0,.3);"></div>
<div class="r" style="left:421.20px;top:267.00px;width:12.20px;height:24.70px;background:#f0f0f0;"></div>
<span class="t" style="top:268.40px;font-size:6.1px;color:#4a4a4a;left:437.00px;">Change password...</span>
<span class="t" style="top:280.20px;font-size:6.1px;color:#4a4a4a;left:437.00px;">Change key file...</span>
<div class="r" style="left:496.30px;top:106.80px;width:125.40px;height:184.20px;background:#fff;box-shadow:0 0 0 0.7px #a8a8a8, 1.5px 1.5px 2px rgba(0,0,0,.3);"></div>
<div class="r" style="left:496.60px;top:107.20px;width:12.50px;height:183.50px;background:#eeeeee;"></div>
<span class="t" style="top:108.70px;font-size:6.1px;color:#ababab;left:511.80px;">Open in new tab</span>
<span class="t" style="top:120.50px;font-size:6.1px;color:#4c4c4c;left:511.80px;">Close tab</span>
<span class="t" style="top:132.50px;font-size:6.1px;color:#ababab;left:511.80px;">Close all tabs</span>
<span class="t" style="top:145.20px;font-size:6.1px;color:#4c4c4c;left:511.80px;">Open in Explorer</span>
<span class="t" style="top:156.80px;font-size:6.1px;color:#4c4c4c;left:511.80px;">Refresh</span>
<span class="t" style="top:156.80px;font-size:6.1px;color:#4c4c4c;left:576.20px;">F5</span>
<span class="t" style="top:170.00px;font-size:6.1px;color:#4c4c4c;left:511.80px;">Mount...</span>
<span class="t" style="top:170.00px;font-size:6.1px;color:#4c4c4c;left:576.20px;">Ctrl + Alt + M</span>
<span class="t" style="top:181.70px;font-size:6.1px;color:#4c4c4c;left:511.80px;">Dismount</span>
<span class="t" style="top:193.40px;font-size:6.1px;color:#4c4c4c;left:511.80px;">Dismount all</span>
<span class="t" style="top:193.40px;font-size:6.1px;color:#4c4c4c;left:576.20px;">Ctrl + Alt + D</span>
<span class="t" style="top:206.80px;font-size:6.1px;color:#4c4c4c;left:511.80px;">Add to Favorites...</span>
<span class="t" style="top:218.00px;font-size:6.1px;color:#4c4c4c;left:511.80px;">Remove from Favorites</span>
<span class="t" style="top:230.00px;font-size:6.1px;color:#ababab;left:511.80px;">Delete from disk</span>
<span class="t" style="top:243.00px;font-size:6.1px;color:#ababab;left:511.80px;">Move up</span>
<span class="t" style="top:254.60px;font-size:6.1px;color:#ababab;left:511.80px;">Move down</span>
<span class="t" style="top:268.00px;font-size:6.1px;color:#4c4c4c;left:511.80px;">Change credentials</span>
<span class="t" style="top:279.60px;font-size:6.1px;color:#4c4c4c;left:511.80px;">Properties</span>
<div class="r" style="left:510.20px;top:143.40px;width:110.50px;height:0.00px;background:transparent;border-top:0.8px dotted #d2d2d2;"></div>
<div class="r" style="left:510.20px;top:168.50px;width:110.50px;height:0.00px;background:transparent;border-top:0.8px dotted #d2d2d2;"></div>
<div class="r" style="left:510.20px;top:205.00px;width:110.50px;height:0.00px;background:transparent;border-top:0.8px dotted #d2d2d2;"></div>
<div class="r" style="left:510.20px;top:241.00px;width:110.50px;height:0.00px;background:transparent;border-top:0.8px dotted #d2d2d2;"></div>
<div class="r" style="left:510.20px;top:265.80px;width:110.50px;height:0.00px;background:transparent;border-top:0.8px dotted #d2d2d2;"></div>
<svg class="r" style="left:0;top:0" width="640" height="414" viewBox="0 0 640 414"><rect x="499.3" y="146.5" width="6.4" height="6" fill="#fff" stroke="#9a9a9a" stroke-width="0.5"/><path d="M499,146.5 L506,146.5" stroke="#666" stroke-width="0.9"/><path d="M500.6,148.4 L500.6,151.4" stroke="#f0a030" stroke-width="0.7"/><path d="M501.8,148.6 L504.6,148.6" stroke="#ccc" stroke-width="0.5"/><circle cx="504.5" cy="150.5" r="1.5" fill="#fff" stroke="#2f86e8" stroke-width="0.8"/><path d="M505.6,151.7 L507,153.2" stroke="#2f86e8" stroke-width="0.9" stroke-linecap="round"/><g fill="none" stroke="#1e8cf4" stroke-width="1.3"><path d="M499.9,161.2 A2.7,2.7 0 0 1 504.9,160.6"/><path d="M505.3,162.6 A2.7,2.7 0 0 1 500.3,163.2"/></g><polygon points="505.9,158.8 505.9,161.6 503.2,161.2" fill="#1e8cf4"/><polygon points="499.3,165 499.3,162.2 502,162.6" fill="#1e8cf4"/><polygon points="614.8,271.6 616.6,273 614.8,274.4" fill="#555"/><path d="M500.2,211.8 L504.8,211.8 M502.5,209.5 L502.5,214.1" stroke="#22a022" stroke-width="1.1"/><path d="M500.2,223.6 L504.8,223.6" stroke="#e02020" stroke-width="1.1"/></svg>
</body></html>
